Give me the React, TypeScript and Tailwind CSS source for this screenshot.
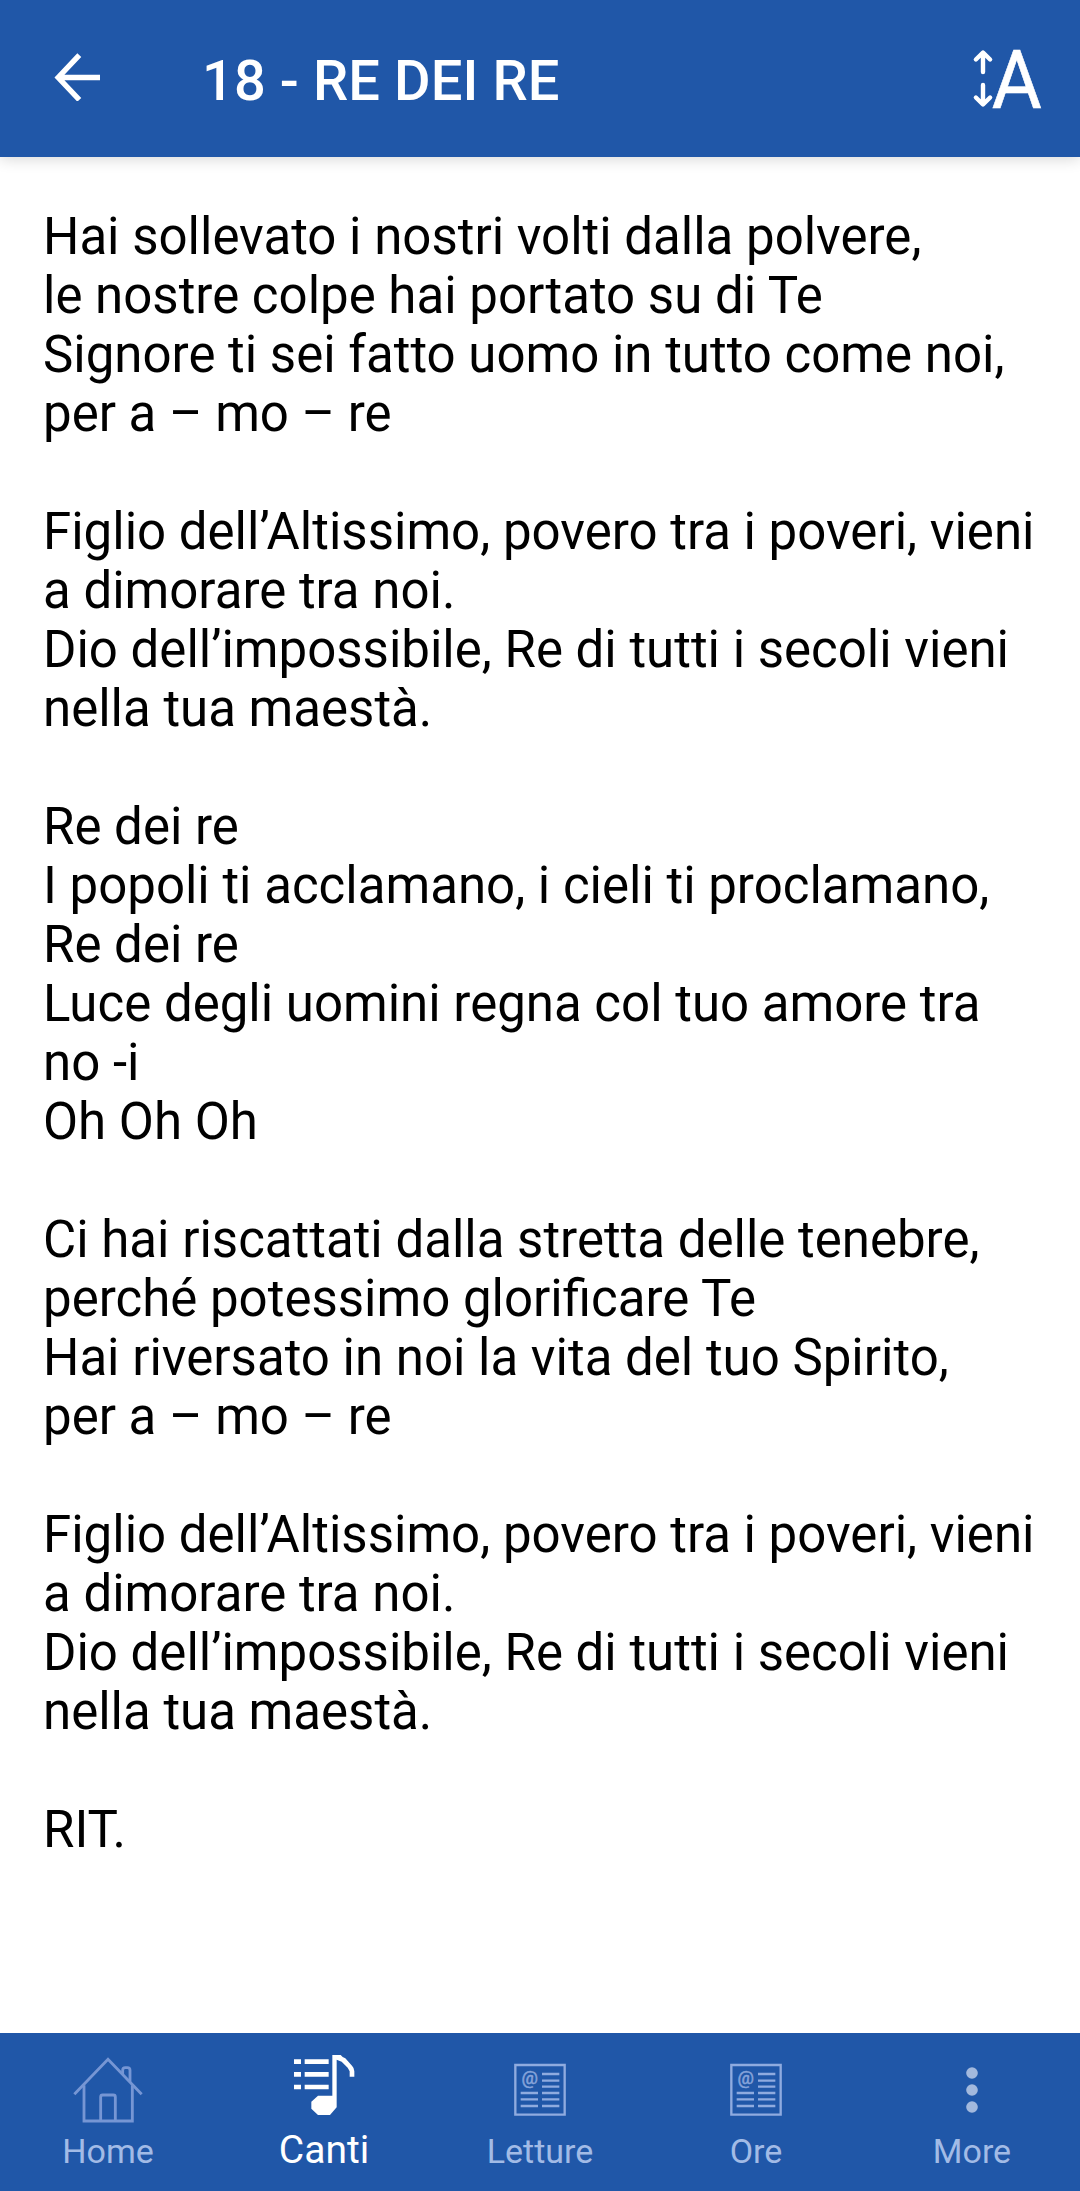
import { useState, type ReactNode } from 'react';

const verses = [
  [
    'Hai sollevato i nostri volti dalla polvere,',
    'le nostre colpe hai portato su di Te',
    'Signore ti sei fatto uomo in tutto come noi,',
    'per a – mo – re',
  ],
  [
    'Figlio dell’Altissimo, povero tra i poveri, vieni a dimorare tra noi.',
    'Dio dell’impossibile, Re di tutti i secoli vieni nella tua maestà.',
  ],
  [
    'Re dei re',
    'I popoli ti acclamano, i cieli ti proclamano,',
    'Re dei re',
    'Luce degli uomini regna col tuo amore tra no -i',
    'Oh Oh Oh',
  ],
  [
    'Ci hai riscattati dalla stretta delle tenebre,',
    'perché potessimo glorificare Te',
    'Hai riversato in noi la vita del tuo Spirito,',
    'per a – mo – re',
  ],
  [
    'Figlio dell’Altissimo, povero tra i poveri, vieni a dimorare tra noi.',
    'Dio dell’impossibile, Re di tutti i secoli vieni nella tua maestà.',
  ],
  ['RIT.'],
];

function BackIcon() {
  return (
    <svg className="h-12 w-12" viewBox="0 0 48 48" fill="none" stroke="currentColor" strokeWidth="5.4">
      <path d="M26.3 2.2 5.2 24.5l21.1 22.3M4.5 24.5H47" />
    </svg>
  );
}

function TextSizeIcon() {
  return (
    <svg className="h-[112px] w-[84px]" viewBox="0 -24 84 112" fill="none">
      <g stroke="currentColor" strokeWidth="4.4" strokeLinecap="round" strokeLinejoin="round">
        <path d="M14 25V6M6.9 12.5l7.1-7 7.1 7" />
        <path d="M14 38v19M6.9 50.5l7.1 7 7.1-7" />
      </g>
      <text
        x="22.8"
        y="61"
        fontSize="81.6"
        textLength="50"
        lengthAdjust="spacingAndGlyphs"
        fill="currentColor"
        stroke="currentColor"
        strokeWidth="0.6"
        className="font-[Roboto,sans-serif]"
      >
        A
      </text>
    </svg>
  );
}

function HomeIcon() {
  return (
    <svg className="h-20 w-[72px]" viewBox="96 54 216 240" fill="none" stroke="#7696d4" strokeWidth="8.5">
      <path d="M103 193 204 88l101 105" />
      <path d="M132 166v107h145V166" />
      <path d="M182 273v-72q0-6 6-6h32q6 0 6 6v72" />
      <path d="M248 132v-11q0-8 8-8h6q8 0 8 8v34" />
    </svg>
  );
}

function SongsIcon() {
  return (
    <svg className="h-20 w-[72px]" viewBox="84 54 216 240" fill="currentColor">
      <path d="M102 88h21v14h-21zM102 126h21v14h-21zM102 164h21v14h-21z" />
      <path d="M134 88h72v14h-72zM134 126h72v14h-72zM134 164h72v14h-72z" />
      <path d="M217 75h25q6 8 14 10l20 22q7 7 7 17v16h-14v-16l-6-11-18-18-15-6v143l-20 23h-36l-20-19v-21l20-18h43z" />
    </svg>
  );
}

function NewsIcon() {
  return (
    <svg className="h-20 w-[72px]" viewBox="102 54 216 240" fill="none" stroke="#8fabdf" strokeWidth="7">
      <path d="M136 105h148v149H136z" />
      <path d="M216 132h52M216 152h52M216 170h52M216 189h52M216 208h52M216 228h52" />
      <path d="M152 189h52M152 208h52M152 228h52" />
      <text
        x="179"
        y="162"
        fontSize="55"
        textAnchor="middle"
        fill="#86a3da"
        stroke="#86a3da"
        strokeWidth="1.5"
        className="font-[Roboto,sans-serif]"
      >
        @
      </text>
    </svg>
  );
}

function MoreIcon() {
  return (
    <svg className="h-20 w-[72px]" viewBox="738 54 216 240" fill="#a3b9dd">
      <circle cx="846" cy="129" r="17.5" />
      <circle cx="846" cy="180" r="17.5" />
      <circle cx="846" cy="231" r="17.5" />
    </svg>
  );
}

const tabs: { label: string; icon: ReactNode }[] = [
  { label: 'Home', icon: <HomeIcon /> },
  { label: 'Canti', icon: <SongsIcon /> },
  { label: 'Letture', icon: <NewsIcon /> },
  { label: 'Ore', icon: <NewsIcon /> },
  { label: 'More', icon: <MoreIcon /> },
];

export default function App() {
  const [activeTab, setActiveTab] = useState('Canti');

  return (
    <div className="flex h-[2191px] w-[1080px] flex-col bg-white font-[Roboto,sans-serif]">
      {/* Top bar */}
      <header className="z-10 flex h-[157px] items-center bg-[#2057a8] pr-[27px] pl-[53px] text-white shadow-[0_2px_14px_rgba(0,0,0,0.16)]">
        <button aria-label="Indietro" className="-mt-1">
          <BackIcon />
        </button>
        <h1 className="mt-1 ml-[101px] flex-1 text-[56px] leading-[66px] font-medium tracking-[0.1px]">
          18 - RE DEI RE
        </h1>
        <button aria-label="Dimensione testo">
          <TextSizeIcon />
        </button>
      </header>

      {/* Lyrics */}
      <main className="flex flex-1 flex-col gap-[59px] pt-[50px] pr-[36px] pl-[43px] text-[51px] leading-[59px] text-black">
        {verses.map((lines, i) => (
          <section key={i}>
            {lines.map((line, j) => (
              <p key={j}>{line}</p>
            ))}
          </section>
        ))}
      </main>

      {/* Bottom navigation */}
      <nav className="grid h-[158px] grid-cols-5 bg-[#2057a8]">
        {tabs.map(({ label, icon }) => (
          <button
            key={label}
            onClick={() => setActiveTab(label)}
            className={`flex flex-col items-center pt-[15px] ${
              activeTab === label ? 'text-white' : 'text-[#a2bbe6]'
            }`}
          >
            {icon}
            <span
              className={
                activeTab === label
                  ? 'text-[39px] leading-[44px]'
                  : 'text-[34px] leading-[46px]'
              }
            >
              {label}
            </span>
          </button>
        ))}
      </nav>
    </div>
  );
}
